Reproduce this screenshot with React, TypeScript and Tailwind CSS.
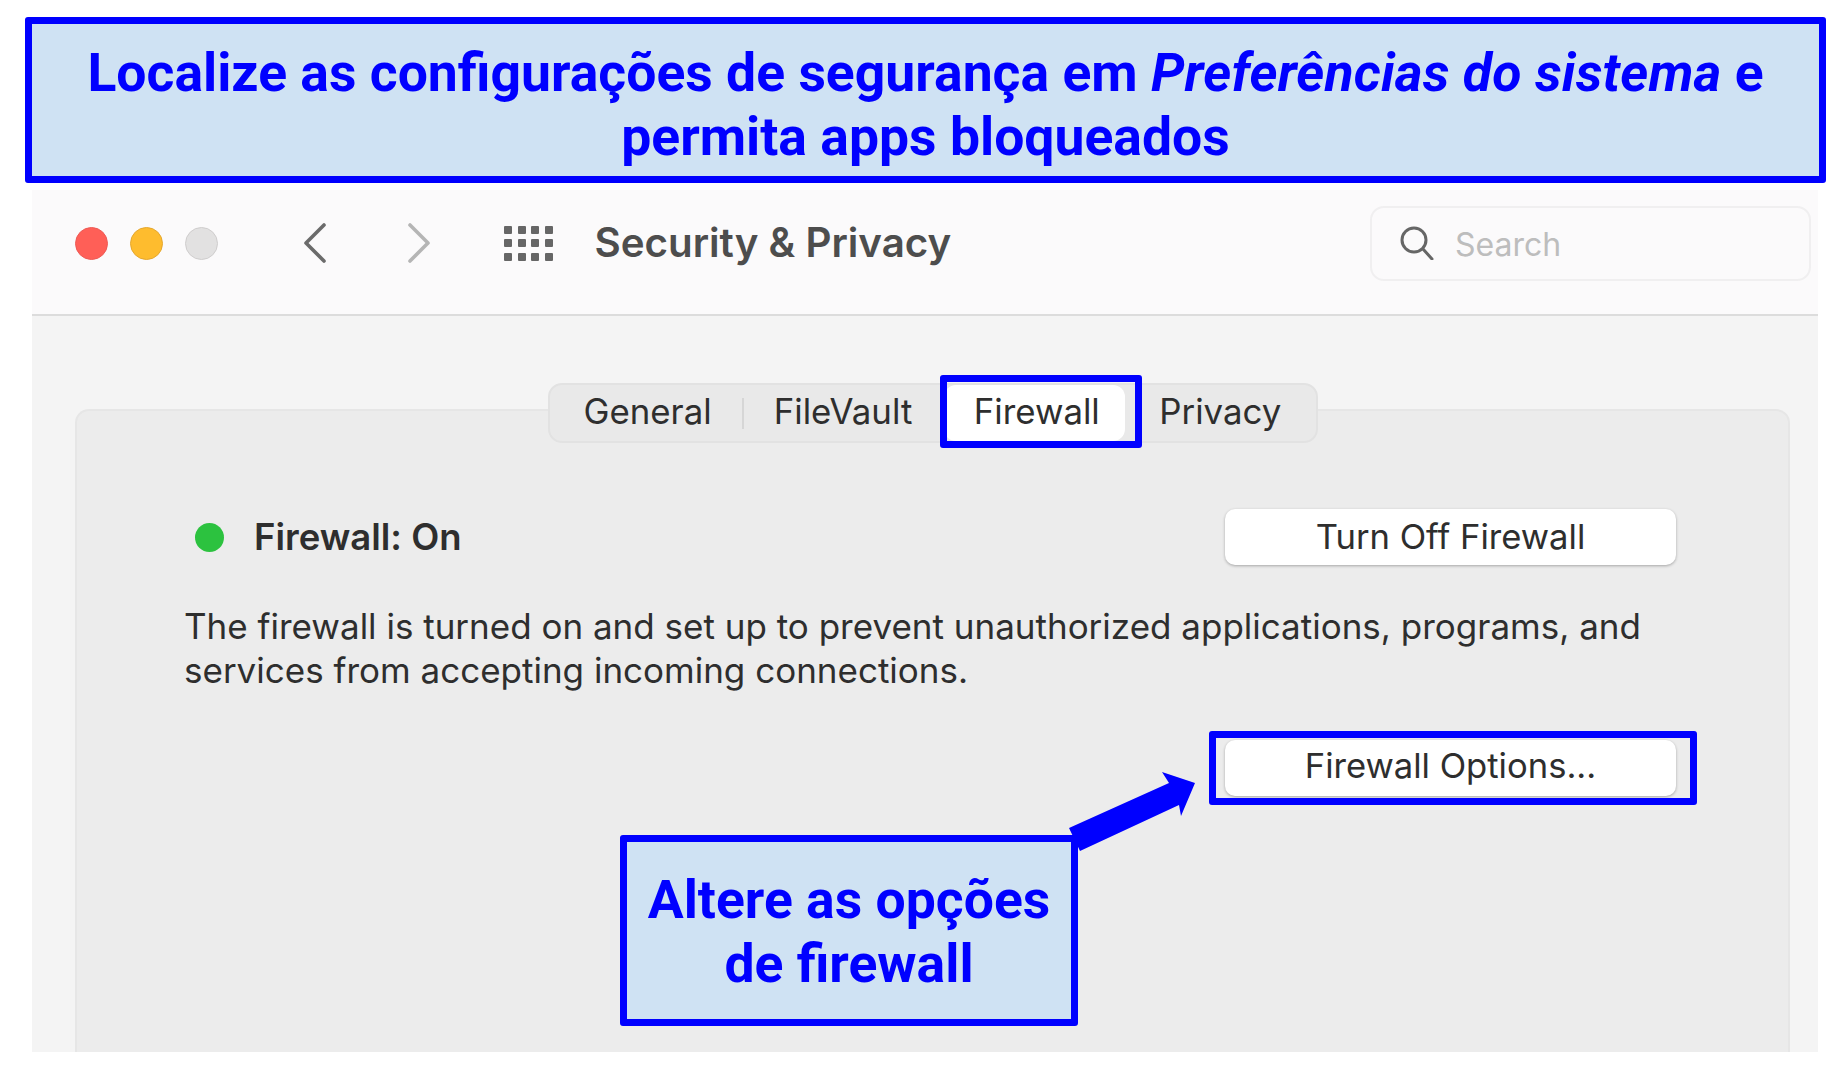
const headFont = "font-['Roboto',sans-serif]";
const macFont = "font-['Inter',sans-serif]";

const Button = ({ label, className = '' }: { label: string; className?: string }) => (
  <div
    className={`flex w-[451px] items-center justify-center rounded-[10px] bg-white text-[34.6px] text-[#2e2e2e] shadow-[0_1px_3px_rgba(0,0,0,0.3)] ${className}`}
  >
    {label}
  </div>
);

const AppGrid = () => (
  <div className="grid grid-cols-4 gap-[5.5px]">
    {Array.from({ length: 12 }).map((_, i) => (
      <div key={i} className="h-[8px] w-[8px] rounded-[1px] bg-[#666666]" />
    ))}
  </div>
);

const Chevron = ({ d, color, className }: { d: string; color: string; className: string }) => (
  <svg viewBox="0 0 24 40" className={`h-[40px] w-[24px] ${className}`} fill="none" stroke={color} strokeWidth="3.6" strokeLinecap="round" strokeLinejoin="round">
    <path d={d} />
  </svg>
);

const Toolbar = () => (
  <div className="flex h-[126px] items-center border-b-2 border-[#dcdcdc] bg-[#fbfafb] pb-[18px] pl-[43px] pr-[7px]">
    <div className="h-[33px] w-[33px] rounded-full border border-[#ee5a55] bg-[#ff5f57]" />
    <div className="ml-[22px] h-[33px] w-[33px] rounded-full border border-[#e5a72e] bg-[#febc2e]" />
    <div className="ml-[22px] h-[33px] w-[33px] rounded-full border border-[#cfcdcd] bg-[#e2e1e1]" />
    <Chevron d="M21 2L3 20l18 18" color="#6b6b6b" className="ml-[85px]" />
    <Chevron d="M3 2l18 18L3 38" color="#b5b5b5" className="ml-[80px]" />
    <div className="ml-[73px]">
      <AppGrid />
    </div>
    <div className={`ml-[42px] text-[40.3px] font-semibold text-[#4d4d4d] ${macFont}`}>Security &amp; Privacy</div>
    <div className="ml-auto flex h-[75px] w-[441px] items-center rounded-[14px] border-2 border-[#f0eff0] pl-[28px]">
      <svg viewBox="0 0 34 34" className="h-[34px] w-[34px]" fill="none" stroke="#666666" strokeWidth="3">
        <circle cx="14" cy="14" r="12" />
        <path d="M23 23l9 10" strokeLinecap="round" />
      </svg>
      <span className={`ml-[21px] translate-y-[2px] text-[32px] text-[#bdbdbd] ${macFont}`}>Search</span>
    </div>
  </div>
);

const Tabs = () => (
  <div className="relative z-10 mx-auto -mt-[28px] flex h-[60px] w-[770px] items-center rounded-[14px] border-2 border-[#e2e2e2] bg-[#e9e9e9] text-[34.8px] text-[#2e2e2e]">
    <span className="ml-[34px] -translate-y-[2px]">General</span>
    <div className="ml-[30px] h-[31px] w-[2px] bg-[#d6d6d6]" />
    <span className="ml-[30px] -translate-y-[2px]">FileVault</span>
    <div className="ml-[32px] flex h-full w-[181px] items-center justify-center rounded-[12px] bg-white">
      <span className="translate-x-[2px] -translate-y-[2px]">Firewall</span>
    </div>
    <span className="ml-[34px] -translate-y-[2px]">Privacy</span>
  </div>
);

export default function App() {
  return (
    <div className={`relative h-[1070px] w-[1843px] overflow-hidden bg-white ${macFont}`}>
      <div className="pl-[25px] pt-[17px]">
        <div
          className={`flex h-[166px] w-[1801px] items-center justify-center rounded-[3px] border-[7px] border-[#0000ff] bg-[#cfe2f3] pt-[10px] text-center text-[53.5px] font-bold leading-[64px] text-[#0000ff] ${headFont}`}
        >
          <div className="w-[1700px]">
            Localize as configurações de segurança em <em className="tracking-[0.15px]">Preferências do sistema</em> e permita apps bloqueados
          </div>
        </div>
      </div>

      <div className="ml-[32px] mt-[7px] h-[862px] w-[1786px] bg-[#f4f4f4]">
        <Toolbar />
        <div className="pl-[43px] pt-[93px]">
          <div className="h-[643px] w-[1715px] rounded-t-[14px] border-2 border-b-0 border-[#e6e6e6] bg-[#ececec]">
            <Tabs />
            <div className="mt-[60px] flex h-[68px] items-center pl-[118px] pr-[112px]">
              <div className="h-[29px] w-[29px] rounded-full bg-[#2cc23f]" />
              <span className="ml-[30px] text-[36.5px] font-semibold text-[#2e2e2e]">Firewall: On</span>
              <Button label="Turn Off Firewall" className="ml-auto h-[56px]" />
            </div>
            <p className="ml-[107px] mt-[33px] w-[1520px] text-[35px] leading-[44px] text-[#2e2e2e]">
              The firewall is turned on and set up to prevent unauthorized applications, programs, and services from accepting incoming connections.
            </p>
            <Button label="Firewall Options..." className="ml-[1148px] mt-[48px] h-[56px] pb-[4px]" />
          </div>
        </div>
      </div>

      {/* annotations on top of the screenshot */}
      <div className="absolute left-[940px] top-[375px] z-20 h-[73px] w-[202px] rounded-[3px] border-[7px] border-[#0000ff]" />
      <div className="absolute left-[1209px] top-[731px] z-20 h-[74px] w-[488px] rounded-[3px] border-[7px] border-[#0000ff]" />
      <svg className="absolute left-[1060px] top-[765px] z-20" width="145" height="95" viewBox="1060 765 145 95">
        <path d="M1069 828L1169 783L1162 772L1195 783L1181 816L1179 805L1080 851Z" fill="#0000ff" />
      </svg>
      <div
        className={`absolute left-[620px] top-[835px] z-20 flex h-[191px] w-[458px] items-center justify-center rounded-[3px] border-[7px] border-[#0000ff] bg-[#cfe2f3] pt-[2px] text-center text-[53.5px] font-bold leading-[64px] text-[#0000ff] ${headFont}`}
      >
        <div>
          Altere as opções
          <br />
          de firewall
        </div>
      </div>
    </div>
  );
}
